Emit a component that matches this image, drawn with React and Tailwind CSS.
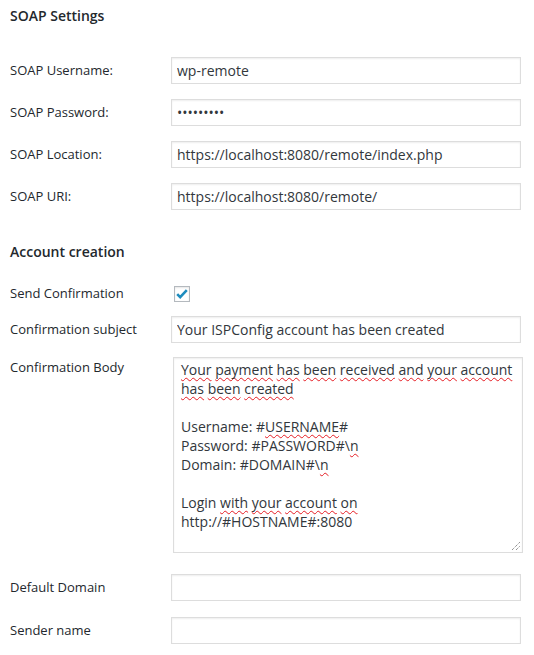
import React from 'react';

const font = { fontFamily: '"Open Sans", "Noto Sans", Arial, sans-serif' };

const Sp = ({ children }) => (
  <span className="underline decoration-wavy decoration-[#e51c23] decoration-1 underline-offset-[2px] [text-decoration-skip-ink:none]">
    {children}
  </span>
);

const TextInput = ({ value, type = 'text' }) => (
  <input
    type={type}
    defaultValue={value}
    readOnly
    className="w-[350px] h-[27px] border border-[#ddd] bg-white px-[5px] text-[14px] text-[#32373c] shadow-[inset_0_1px_2px_rgba(0,0,0,0.07)] outline-none"
    style={font}
  />
);

const Row = ({ label, children, className = '' }) => (
  <div className={`flex items-center ${className}`}>
    <label className="w-[161px] shrink-0 text-[13px] text-[#23282d]">{label}</label>
    {children}
  </div>
);

const App = () => {
  return (
    <div className="min-h-[655px] bg-white pl-[10px] pt-[6px]" style={font}>
      <h2 className="h-5 text-[14px] leading-5 font-semibold text-[#23282d]">SOAP Settings</h2>

      <div className="mt-[31px] flex flex-col gap-[15px]">
        <Row label="SOAP Username:">
          <TextInput value="wp-remote" />
        </Row>
        <Row label="SOAP Password:">
          <TextInput value="wp-remote" type="password" />
        </Row>
        <Row label="SOAP Location:">
          <TextInput value="https://localhost:8080/remote/index.php" />
        </Row>
        <Row label="SOAP URI:">
          <TextInput value="https://localhost:8080/remote/" />
        </Row>
      </div>

      <h2 className="mt-[32px] h-5 text-[14px] leading-5 font-semibold text-[#23282d]">Account creation</h2>

      <Row label="Send Confirmation" className="mt-[18px] h-[27px]">
        <div className="ml-[3px] flex h-4 w-4 items-center justify-center border border-[#b4b9be] bg-white shadow-[inset_0_1px_2px_rgba(0,0,0,0.1)]">
          <svg width="14" height="14" viewBox="0 0 14 14">
            <path d="M2.2 7.2 L5.2 10.2 L11.8 3.2" fill="none" stroke="#1e8cbe" strokeWidth="2.6" />
          </svg>
        </div>
      </Row>

      <Row label="Confirmation subject" className="mt-[9px]">
        <TextInput value="Your ISPConfig account has been created" />
      </Row>

      <div className="mt-[14px] flex items-start">
        <label className="w-[161px] shrink-0 text-[13px] leading-5 text-[#23282d]">Confirmation Body</label>
        <div className="relative ml-[2px] h-[196px] w-[350px] border border-[#ddd] bg-white pl-[7px] pt-[2px] text-[14px] leading-[19px] whitespace-nowrap text-[#32373c] shadow-[inset_0_1px_2px_rgba(0,0,0,0.07)]">
          <div>
            <Sp>Your</Sp> <Sp>payment</Sp> <Sp>has</Sp> <Sp>been</Sp> <Sp>received</Sp> <Sp>and</Sp> <Sp>your</Sp> <Sp>account</Sp>
          </div>
          <div>
            <Sp>has</Sp> <Sp>been</Sp> <Sp>created</Sp>
          </div>
          <div className="h-[19px]" />
          <div>
            Username: #<Sp>USERNAME</Sp>#
          </div>
          <div>
            Password: #PASSWORD#\<Sp>n</Sp>
          </div>
          <div>
            Domain: #DOMAIN#\<Sp>n</Sp>
          </div>
          <div className="h-[19px]" />
          <div>
            Login <Sp>with</Sp> <Sp>your</Sp> <Sp>account</Sp> <Sp>on</Sp>
          </div>
          <div>http://#HOSTNAME#:8080</div>
          <svg className="absolute right-[1px] bottom-[1px]" width="10" height="10" viewBox="0 0 10 10">
            <path d="M1 9 L9 1 M5 9 L9 5" stroke="#666" strokeWidth="1" strokeDasharray="1 1" />
          </svg>
        </div>
      </div>

      <Row label="Default Domain" className="mt-[21px]">
        <TextInput value="" />
      </Row>
      <Row label="Sender name" className="mt-[16px]">
        <TextInput value="" />
      </Row>
    </div>
  );
};

export default App;
